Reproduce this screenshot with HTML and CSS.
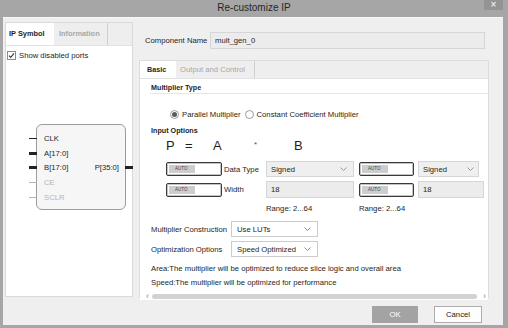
FILE: index.html
```html
<!DOCTYPE html>
<html lang="en">
    <head>
        <meta charset="UTF-8"><meta name="viewport" content="width=device-width, initial-scale=1.0"><title>Re-customize IP</title>
        <link rel="stylesheet" href="styles.css">
    </head>
    <body>
        <div class="window">
            <div class="titlebar">
                <span></span>
                <span class="title">Re-customize IP</span>
                <span class="close">&times;</span>
            </div>
            <div class="client">
                <div class="main">
                    <div class="side">
                        <div class="tabs side-tabs">
                            <div class="tab active">IP Symbol</div>
                            <div class="tab dim bold">Information</div>
                        </div>
                        <div class="side-body">
                            <div class="check">
                                <svg width="9" height="9" viewBox="0 0 9 9"><rect x="0.5" y="0.5" width="8" height="8" fill="#fff" stroke="#8a8a8a"/><path d="M2 4.6 L3.7 6.4 L7 2.3" fill="none" stroke="#3a3a3a" stroke-width="1.1"/></svg>
                                <span>Show disabled ports</span>
                            </div>
                            <div class="symbol">
                                <div class="port"><i class="pin"></i>CLK</div>
                                <div></div>
                                <div class="port"><i class="pin bus"></i>A[17:0]</div>
                                <div></div>
                                <div class="port"><i class="pin bus"></i>B[17:0]</div>
                                <div class="port out">P[35:0]<i class="pin bus"></i></div>
                                <div class="port off"><i class="pin"></i>CE</div>
                                <div></div>
                                <div class="port off"><i class="pin"></i>SCLR</div>
                                <div></div>
                            </div>
                        </div>
                    </div>
                    <div class="config">
                        <div class="comp-row">
                            <span class="comp-label">Component Name</span>
                            <div class="field comp">mult_gen_0</div>
                        </div>
                        <div class="panel">
                            <div class="tabs panel-tabs">
                                <div class="tab active basic">Basic</div>
                                <div class="tab dim output">Output and Control</div>
                            </div>
                            <div class="panel-body">
                                <div class="section first">Multiplier Type</div>
                                <div class="radios">
                                    <span class="radio on"></span><span class="radio-text">Parallel Multiplier</span>
                                    <span class="radio"></span><span class="radio-text">Constant Coefficient Multiplier</span>
                                </div>
                                <div class="section plain">Input Options</div>
                                <div class="pab">
                                    <span class="w1">P</span><span class="w2">=</span><span class="w3">A</span><span class="w4 star">*</span><span>B</span>
                                </div>
                                <div class="opt-row">
                                    <div class="auto"><span>AUTO</span></div>
                                    <span class="opt-label">Data Type</span>
                                    <div class="field select sel-a">Signed<svg width="7" height="4" viewBox="0 0 7 4"><path d="M0.5 0.5 L3.5 3.5 L6.5 0.5" fill="none" stroke="#9a9a9a"/></svg></div>
                                    <div class="auto auto-b"><span>AUTO</span></div>
                                    <div class="field select sel-b">Signed<svg width="7" height="4" viewBox="0 0 7 4"><path d="M0.5 0.5 L3.5 3.5 L6.5 0.5" fill="none" stroke="#9a9a9a"/></svg></div>
                                </div>
                                <div class="opt-row second">
                                    <div class="auto"><span>AUTO</span></div>
                                    <span class="opt-label">Width</span>
                                    <div class="field num sel-a">18</div>
                                    <div class="auto auto-b"><span>AUTO</span></div>
                                    <div class="field num num-b">18</div>
                                </div>
                                <div class="range-row">
                                    <span class="range-a">Range: 2...64</span>
                                    <span>Range: 2...64</span>
                                </div>
                                <div class="form-row mc">
                                    <span class="form-label">Multiplier Construction</span>
                                    <div class="field drop">Use LUTs<svg width="7" height="4" viewBox="0 0 7 4"><path d="M0.5 0.5 L3.5 3.5 L6.5 0.5" fill="none" stroke="#8a8a8a"/></svg></div>
                                </div>
                                <div class="form-row oo">
                                    <span class="form-label">Optimization Options</span>
                                    <div class="field drop">Speed Optimized<svg width="7" height="4" viewBox="0 0 7 4"><path d="M0.5 0.5 L3.5 3.5 L6.5 0.5" fill="none" stroke="#8a8a8a"/></svg></div>
                                </div>
                                <div class="note area">Area:The multiplier will be optimized to reduce slice logic and overall area</div>
                                <div class="note speed">Speed:The multiplier will be optimized for performance</div>
                                <div class="hscroll">
                                    <span class="arrow">&lsaquo;</span>
                                    <div class="thumb"></div>
                                    <span class="arrow">&rsaquo;</span>
                                </div>
                            </div>
                        </div>
                    </div>
                </div>
                <div class="buttons">
                    <button class="ok">OK</button>
                    <button class="cancel">Cancel</button>
                </div>
            </div>
        </div>
    </body>
</html>
```
FILE: styles.css
```css
body {
    margin: 0;
    font-family: "Liberation Sans", Arial, sans-serif;
    font-size: 7.7px;
    color: #1e1e1e;
}
.window {
    width: 508px;
    height: 328px;
    background-color: #a6a6a6;
    display: flex;
    flex-direction: column;
}
.titlebar {
    height: 17px;
    display: grid;
    grid-template-columns: 1fr auto 1fr;
    align-items: start;
}
.title {
    font-size: 10px;
    line-height: 15px;
    color: #262626;
}
.close {
    justify-self: end;
    width: 19px;
    height: 10px;
    margin-right: 5px;
    background-color: #949494;
    color: #fff;
    font-size: 10px;
    line-height: 10px;
    text-align: center;
}
.client {
    margin: 0 5px 3px 3px;
    flex: 1;
    background-color: #efefef;
    border-top: 1px solid #f8f8f8;
    box-sizing: border-box;
}
.main {
    display: flex;
    padding: 4px 0 0 2px;
    gap: 5px;
}
.side {
    width: 128px;
    height: 275px;
    box-sizing: border-box;
    border: 1px solid #dadada;
    background-color: #fff;
}
.tabs {
    display: flex;
    background-color: #eeeeee;
    border-bottom: 1px solid #e2e2e2;
}
.tab {
    padding: 0 4px;
    font-weight: bold;
    font-size: 7.4px;
}
.tab.active {
    background-color: #fff;
}
.tab.dim {
    color: #a8a8a8;
    border-right: 1px solid #d0d0d0;
}
.side-tabs {
    height: 22px;
    line-height: 22px;
}
.side-tabs .active {
    width: 48px;
    box-sizing: border-box;
    padding-left: 3px;
}
.side-tabs .dim {
    width: 54px;
    box-sizing: border-box;
    padding-left: 5px;
}
.side-body {
    padding: 4px 0 0 1px;
}
.check {
    display: flex;
    align-items: center;
    gap: 3px;
    height: 10px;
}
.symbol {
    margin: 64px 0 0 29px;
    width: 90px;
    height: 86px;
    box-sizing: border-box;
    border: 1px solid #9c9c9c;
    border-radius: 6px;
    background-color: #f6f6f6;
    padding: 6px 0;
    display: grid;
    grid-template-columns: 1fr auto;
    grid-auto-rows: 14.7px;
    align-items: center;
}
.port {
    display: flex;
    align-items: center;
}
.port .pin {
    width: 8px;
    height: 1px;
    margin-left: -8px;
    margin-right: 7px;
    background-color: #222;
}
.port .pin.bus {
    height: 3px;
}
.port.out .pin {
    margin: 0 -8px 0 6px;
}
.port.off {
    color: #b4b4b4;
}
.port.off .pin {
    background-color: #b4b4b4;
}
.config {
    width: 352px;
}
.comp-row {
    display: flex;
    align-items: center;
    margin-top: 10px;
    padding-left: 7px;
}
.comp-label {
    width: 65px;
}
.field {
    box-sizing: border-box;
    border: 1px solid #d6d6d6;
    background-color: #ececec;
    display: flex;
    align-items: center;
    padding-left: 4px;
}
.comp {
    width: 275px;
    height: 17px;
}
.panel {
    margin: 11px 0 0 1px;
    width: 350px;
    height: 238px;
    box-sizing: border-box;
    border: 1px solid #dcdcdc;
    display: flex;
    flex-direction: column;
}
.panel-tabs {
    height: 17px;
    line-height: 17px;
}
.panel-tabs .basic {
    width: 36px;
    box-sizing: border-box;
    padding-left: 7px;
    font-size: 7.2px;
}
.panel-tabs .output {
    width: 79px;
    box-sizing: border-box;
    padding-left: 4px;
    font-weight: normal;
    font-size: 7.7px;
}
.panel-body {
    flex: 1;
    background-color: #fff;
}
.section {
    margin: 3px 0 0 10px;
    padding-left: 1px;
    line-height: 11px;
    font-weight: bold;
    font-size: 7.2px;
    border-bottom: 1px solid #e6e6e6;
}
.section.plain {
    margin-top: 4.5px;
    border-bottom: none;
}
.radios {
    display: flex;
    align-items: center;
    height: 12px;
    margin-top: 14px;
    padding-left: 30px;
}
.radio {
    width: 9px;
    height: 9px;
    box-sizing: border-box;
    border: 1px solid #9a9a9a;
    border-radius: 50%;
    background-color: #fff;
    display: flex;
    align-items: center;
    justify-content: center;
    margin-left: 4px;
}
.radio.on::after {
    content: "";
    width: 5px;
    height: 5px;
    border-radius: 50%;
    background-color: #5a5a5a;
}
.radio:first-child {
    margin-left: 0;
}
.radio-text {
    margin-left: 3px;
}
.pab {
    margin-top: 2.5px;
    padding-left: 26px;
    font-size: 13px;
    line-height: 14px;
}
.pab span {
    display: inline-block;
}
.pab .w1 { width: 19px; }
.pab .w2 { width: 28px; }
.pab .w3 { width: 41px; }
.pab .w4 { width: 40px; }
.pab .star {
    font-size: 8px;
    vertical-align: 3px;
    color: #555;
}
.opt-row {
    display: flex;
    align-items: center;
    height: 16px;
    margin-top: 8px;
    padding-left: 26px;
}
.opt-row.second {
    height: 17px;
    margin-top: 4px;
}
.auto {
    width: 56px;
    height: 14px;
    box-sizing: border-box;
    border: 1px solid #3a3a3a;
    border-radius: 2px;
    box-shadow: inset 0 0 0 1px #c4c4c4;
    background-color: #fff;
    padding: 2px;
    display: flex;
}
.auto span {
    width: 26px;
    background-color: #cdcdcd;
    font-size: 4.5px;
    line-height: 8px;
    padding-left: 6px;
    box-sizing: border-box;
    color: #444;
}
.auto-b {
    width: 55px;
    margin-left: 5px;
}
.opt-label {
    width: 44px;
    padding-left: 2px;
    box-sizing: border-box;
}
.select {
    height: 16px;
    justify-content: space-between;
    padding-right: 6px;
    background-color: #efefef;
}
.opt-row.second .field {
    height: 17px;
}
.sel-a {
    width: 88px;
}
.sel-b {
    width: 61px;
    margin-left: 4px;
    padding-right: 4px;
}
.num-b {
    width: 66px;
    margin-left: 4px;
}
.range-row {
    margin-top: 4.5px;
    padding-left: 126px;
    line-height: 11px;
    display: flex;
}
.range-a {
    width: 93px;
}
.form-row {
    display: flex;
    align-items: center;
    padding-left: 11px;
    margin-top: 7.5px;
    color: #1e1e1e;
}
.form-row.oo {
    margin-top: 4px;
}
.form-label {
    width: 80px;
    color: #1e1e1e;
}
.drop {
    width: 87px;
    height: 16px;
    background-color: #fff;
    border-color: #cccccc;
    justify-content: space-between;
    padding: 0 6px 0 5px;
}
.note {
    padding-left: 11px;
    line-height: 11px;
    margin-top: 5.5px;
}
.note.speed {
    margin-top: 3px;
}
.hscroll {
    display: flex;
    align-items: center;
    height: 8px;
    margin-top: 4.5px;
    padding-left: 6px;
    color: #888;
    font-size: 9px;
}
.thumb {
    width: 325px;
    height: 5px;
    margin: 0 6px 0 3px;
    border-radius: 3px;
    background-color: #d2d2d2;
}
.arrow {
    line-height: 8px;
}
.buttons {
    display: flex;
    justify-content: flex-end;
    gap: 16px;
    margin-top: 8px;
    padding-right: 21px;
}
.buttons button {
    height: 17px;
    font-family: "Liberation Sans", Arial, sans-serif;
    font-size: 7.7px;
    padding: 0;
}
.ok {
    width: 46px;
    background-color: #a3a3a3;
    border: 1px solid #a3a3a3;
    color: #fff;
}
.cancel {
    width: 48px;
    background-color: #fdfdfd;
    border: 1px solid #adadad;
    color: #222;
}
```
